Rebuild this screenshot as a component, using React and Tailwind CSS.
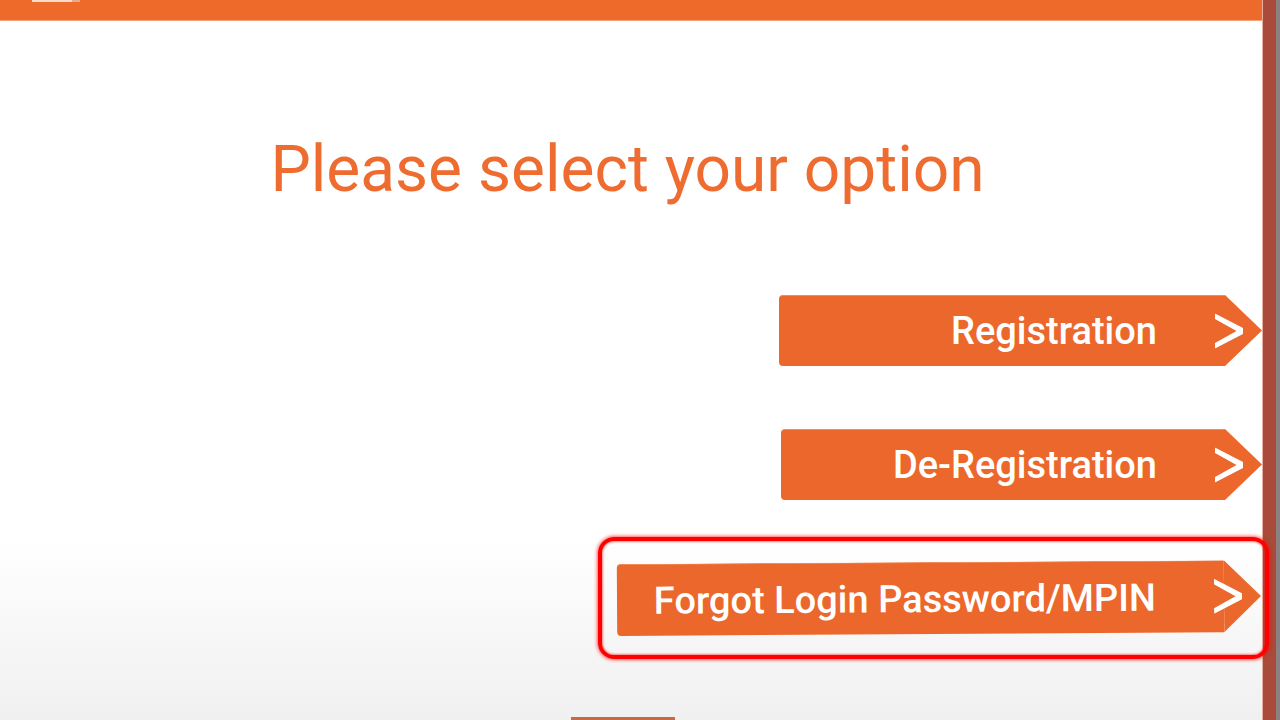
import React from "react";

function Chevron() {
  return (
    <svg
      className="absolute right-[19px] top-1/2 -translate-y-1/2"
      width="28"
      height="35"
      viewBox="0 0 28 35"
    >
      <path d="M0 0 L28 14.5 L28 20.5 L0 35 L0 29.5 L21.5 17.5 L0 5.5 Z" fill="#ffffff" />
    </svg>
  );
}

function ArrowButton({ label, bodyWidth, height, className = "" }) {
  return (
    <div className={`relative flex ${className}`}>
      <div
        className="flex items-center justify-end rounded-l-[4px] border-t border-[#f28a5a] bg-[#EC672B] pr-[68px]"
        style={{ width: bodyWidth, height }}
      >
        <span className="font-['Roboto'] text-[38px] font-medium leading-none text-white">
          {label}
        </span>
      </div>
      <svg width="37" height={height} viewBox={`0 0 37 ${height}`} className="block">
        <polygon points={`0,0 37,${height / 2} 0,${height}`} fill="#EC672B" />
      </svg>
      <Chevron />
    </div>
  );
}

export default function App() {
  return (
    <div className="flex h-[720px] w-[1280px] overflow-hidden font-['Roboto',sans-serif]">
      <div className="flex h-full w-[1262px] flex-col bg-linear-to-b from-white from-[75%] to-[#f0f0f0]">
        <div className="flex h-[21px] shrink-0 items-start border-b border-[#f3a47e] bg-[#EE6A2B] pl-[32px]">
          <div className="h-[2px] w-[40px] bg-[#f7dccd]" />
          <div className="h-[2px] w-[8px] bg-[#e9a98a]" />
        </div>

        <h1 className="mt-[117px] pr-[7px] text-center font-['Roboto'] text-[64px] font-normal leading-[64px] text-[#EE6C30]">
          Please select your option
        </h1>

        <div className="mt-[93px] flex flex-col items-end gap-[63px]">
          <ArrowButton label="Registration" bodyWidth={446} height={71} />
          <ArrowButton label="De-Registration" bodyWidth={444} height={71} />
          <div className="relative mt-[-1px] pr-[1px]">
            <div className="pointer-events-none absolute -bottom-[25px] -left-[19px] -right-[7px] -top-[25px] rounded-[16px] border-[4px] border-[#ff0000] shadow-[0_0_4px_#ff0000,inset_0_0_3px_#ff0000]" />
            <ArrowButton
              label="Forgot Login Password/MPIN"
              bodyWidth={607}
              height={72}
              className="rotate-[-0.35deg]"
            />
          </div>
        </div>

        <div className="mt-auto ml-[571px] h-[3px] w-[104px] bg-[#c9693f]" />
      </div>
      <div className="h-full w-[14px] border-l border-[#e8b0a0] bg-[#A84B3A]" />
      <div className="h-full flex-1 bg-[#8b8082]" />
    </div>
  );
}
